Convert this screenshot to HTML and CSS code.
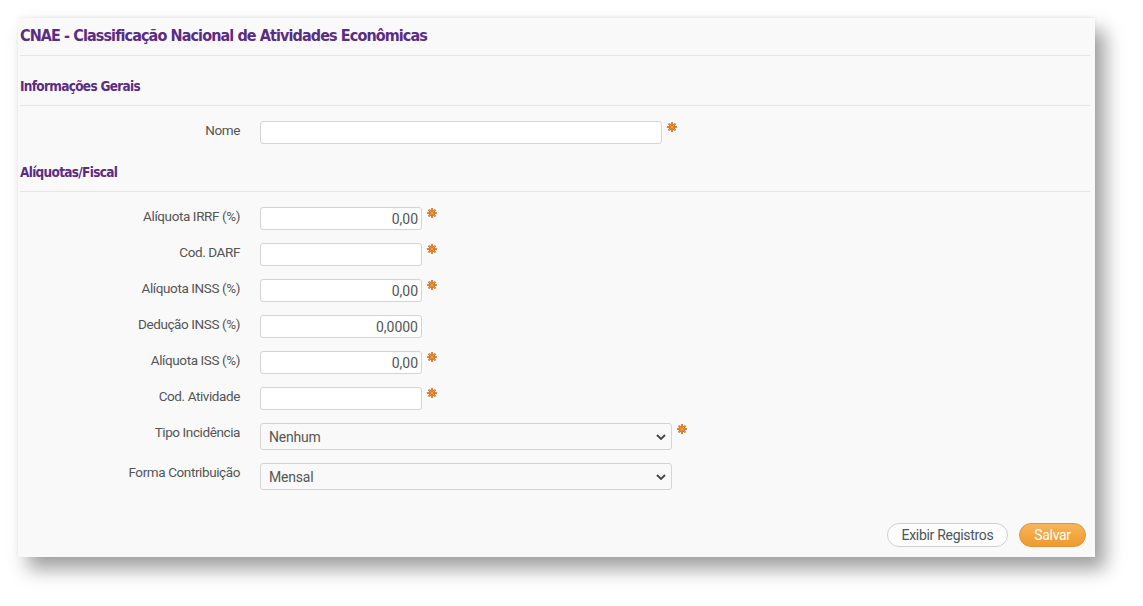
FILE: index.html
```html
<!DOCTYPE html>
<html lang="pt-BR">
<head>
    <meta charset="UTF-8">
    <meta name="viewport" content="width=device-width, initial-scale=1.0">
    <title>CNAE</title>
    <link rel="stylesheet" href="styles.css">
</head>
<body>
    <div class="panel">
        <h1 class="panel-title">CNAE - Classificação Nacional de Atividades Econômicas</h1>

        <h2 class="section-title">Informações Gerais</h2>
        <div class="fields">
            <div class="form-row">
                <label for="nome">Nome</label>
                <input type="text" id="nome" class="input-wide">
                <svg class="req" viewBox="0 0 10 10"><g stroke-linecap="round"><path stroke="#c4621c" stroke-width="2" d="M5 1V9M1 5H9M2.2 2.2L7.8 7.8M7.8 2.2L2.2 7.8"/><path stroke="#f8a53c" stroke-width="0.9" d="M5 1.4V8.6M1.4 5H8.6M2.5 2.5L7.5 7.5M7.5 2.5L2.5 7.5"/></g></svg>
            </div>
        </div>

        <h2 class="section-title next">Alíquotas/Fiscal</h2>
        <div class="fields">
            <div class="form-row">
                <label for="irrf">Alíquota IRRF (%)</label>
                <input type="text" id="irrf" class="input-small num" value="0,00">
                <svg class="req" viewBox="0 0 10 10"><g stroke-linecap="round"><path stroke="#c4621c" stroke-width="2" d="M5 1V9M1 5H9M2.2 2.2L7.8 7.8M7.8 2.2L2.2 7.8"/><path stroke="#f8a53c" stroke-width="0.9" d="M5 1.4V8.6M1.4 5H8.6M2.5 2.5L7.5 7.5M7.5 2.5L2.5 7.5"/></g></svg>
            </div>
            <div class="form-row">
                <label for="darf">Cod. DARF</label>
                <input type="text" id="darf" class="input-small">
                <svg class="req" viewBox="0 0 10 10"><g stroke-linecap="round"><path stroke="#c4621c" stroke-width="2" d="M5 1V9M1 5H9M2.2 2.2L7.8 7.8M7.8 2.2L2.2 7.8"/><path stroke="#f8a53c" stroke-width="0.9" d="M5 1.4V8.6M1.4 5H8.6M2.5 2.5L7.5 7.5M7.5 2.5L2.5 7.5"/></g></svg>
            </div>
            <div class="form-row">
                <label for="inss">Alíquota INSS (%)</label>
                <input type="text" id="inss" class="input-small num" value="0,00">
                <svg class="req" viewBox="0 0 10 10"><g stroke-linecap="round"><path stroke="#c4621c" stroke-width="2" d="M5 1V9M1 5H9M2.2 2.2L7.8 7.8M7.8 2.2L2.2 7.8"/><path stroke="#f8a53c" stroke-width="0.9" d="M5 1.4V8.6M1.4 5H8.6M2.5 2.5L7.5 7.5M7.5 2.5L2.5 7.5"/></g></svg>
            </div>
            <div class="form-row">
                <label for="deducao">Dedução INSS (%)</label>
                <input type="text" id="deducao" class="input-small num" value="0,0000">
            </div>
            <div class="form-row">
                <label for="iss">Alíquota ISS (%)</label>
                <input type="text" id="iss" class="input-small num" value="0,00">
                <svg class="req" viewBox="0 0 10 10"><g stroke-linecap="round"><path stroke="#c4621c" stroke-width="2" d="M5 1V9M1 5H9M2.2 2.2L7.8 7.8M7.8 2.2L2.2 7.8"/><path stroke="#f8a53c" stroke-width="0.9" d="M5 1.4V8.6M1.4 5H8.6M2.5 2.5L7.5 7.5M7.5 2.5L2.5 7.5"/></g></svg>
            </div>
            <div class="form-row">
                <label for="atividade">Cod. Atividade</label>
                <input type="text" id="atividade" class="input-small">
                <svg class="req" viewBox="0 0 10 10"><g stroke-linecap="round"><path stroke="#c4621c" stroke-width="2" d="M5 1V9M1 5H9M2.2 2.2L7.8 7.8M7.8 2.2L2.2 7.8"/><path stroke="#f8a53c" stroke-width="0.9" d="M5 1.4V8.6M1.4 5H8.6M2.5 2.5L7.5 7.5M7.5 2.5L2.5 7.5"/></g></svg>
            </div>
            <div class="form-row">
                <label for="incidencia">Tipo Incidência</label>
                <div class="select-box">
                    <select id="incidencia"><option>Nenhum</option></select>
                    <svg class="chevron" viewBox="0 0 10 6"><path d="M1 1L5 5L9 1" fill="none" stroke="#444" stroke-width="1.8"/></svg>
                </div>
                <svg class="req" viewBox="0 0 10 10"><g stroke-linecap="round"><path stroke="#c4621c" stroke-width="2" d="M5 1V9M1 5H9M2.2 2.2L7.8 7.8M7.8 2.2L2.2 7.8"/><path stroke="#f8a53c" stroke-width="0.9" d="M5 1.4V8.6M1.4 5H8.6M2.5 2.5L7.5 7.5M7.5 2.5L2.5 7.5"/></g></svg>
            </div>
            <div class="form-row">
                <label for="contribuicao">Forma Contribuição</label>
                <div class="select-box">
                    <select id="contribuicao"><option>Mensal</option></select>
                    <svg class="chevron" viewBox="0 0 10 6"><path d="M1 1L5 5L9 1" fill="none" stroke="#444" stroke-width="1.8"/></svg>
                </div>
            </div>
        </div>

        <div class="actions">
            <button class="btn btn-default">Exibir Registros</button>
            <button class="btn btn-primary">Salvar</button>
        </div>
    </div>
</body>
</html>
```

FILE: styles.css
```css
html, body {
    margin: 0;
    min-height: 606px;
}
body {
    padding: 18px 0 0 18px;
    box-sizing: border-box;
    background-color: #fff;
    font-family: Roboto, "Liberation Sans", sans-serif;
    color: #555;
}
.panel {
    width: 1077px;
    height: 539px;
    background-color: #f9f9f9;
    box-shadow: 10px 12px 18px rgba(0, 0, 0, 0.38), 0 -1px 3px rgba(0, 0, 0, 0.06);
    box-sizing: border-box;
    display: flex;
    flex-direction: column;
}
.panel-title {
    margin: 0 5px 0 2px;
    height: 38px;
    line-height: 36px;
    box-sizing: border-box;
    border-bottom: 1px solid #e6e6e6;
    font-family: "DejaVu Sans Condensed", "DejaVu Sans", sans-serif;
    font-stretch: condensed;
    font-size: 16px;
    font-weight: bold;
    letter-spacing: -0.9px;
    color: #5b2c83;
}
.section-title {
    margin: 0 5px 0 2px;
    padding: 20px 0 9px;
    line-height: 20px;
    border-bottom: 1px solid #e6e6e6;
    font-family: "DejaVu Sans Condensed", "DejaVu Sans", sans-serif;
    font-stretch: condensed;
    font-size: 13.5px;
    font-weight: bold;
    letter-spacing: -0.7px;
    color: #5b2c83;
}
.section-title.next {
    margin-top: -2px;
}
.fields {
    display: flex;
    flex-direction: column;
    gap: 13px;
    padding-top: 15px;
}
.form-row {
    display: flex;
    align-items: flex-start;
}
.form-row label {
    width: 222px;
    margin-right: 20px;
    padding-top: 0;
    text-align: right;
    font-size: 13.5px;
    letter-spacing: -0.4px;
    color: #555;
    line-height: 18px;
}
input {
    height: 23px;
    box-sizing: border-box;
    border: 1px solid #d4d4d4;
    border-radius: 3px;
    background: #fff;
    padding: 0 3px;
    font-family: Roboto, sans-serif;
    font-size: 14px;
    color: #555;
}
.input-wide {
    width: 402px;
}
.input-small {
    width: 162px;
}
.num {
    text-align: right;
}
.req {
    width: 10px;
    height: 10px;
    margin: 1px 0 0 5px;
}
.select-box {
    position: relative;
    width: 412px;
    height: 27px;
}
select {
    width: 100%;
    height: 27px;
    appearance: none;
    border: 1px solid #d4d4d4;
    border-radius: 3px;
    background: #f9f9f9;
    padding: 0 8px;
    font-family: Roboto, sans-serif;
    font-size: 14px;
    letter-spacing: -0.2px;
    color: #555;
}
.chevron {
    position: absolute;
    right: 6px;
    top: 11px;
    width: 10px;
    height: 6px;
}
.actions {
    margin-top: auto;
    padding: 0 9px 10px 0;
    display: flex;
    justify-content: flex-end;
    gap: 11px;
}
.btn {
    height: 24px;
    border-radius: 12px;
    font-family: Roboto, sans-serif;
    font-size: 14px;
    letter-spacing: -0.3px;
    cursor: pointer;
}
.btn-default {
    width: 121px;
    background: #fdfdfd;
    border: 1px solid #cfcfcf;
    color: #4a5560;
}
.btn-primary {
    width: 67px;
    background: linear-gradient(#f7b55a, #ef9a2e);
    border: 1px solid #e39434;
    color: #fff;
}
```
